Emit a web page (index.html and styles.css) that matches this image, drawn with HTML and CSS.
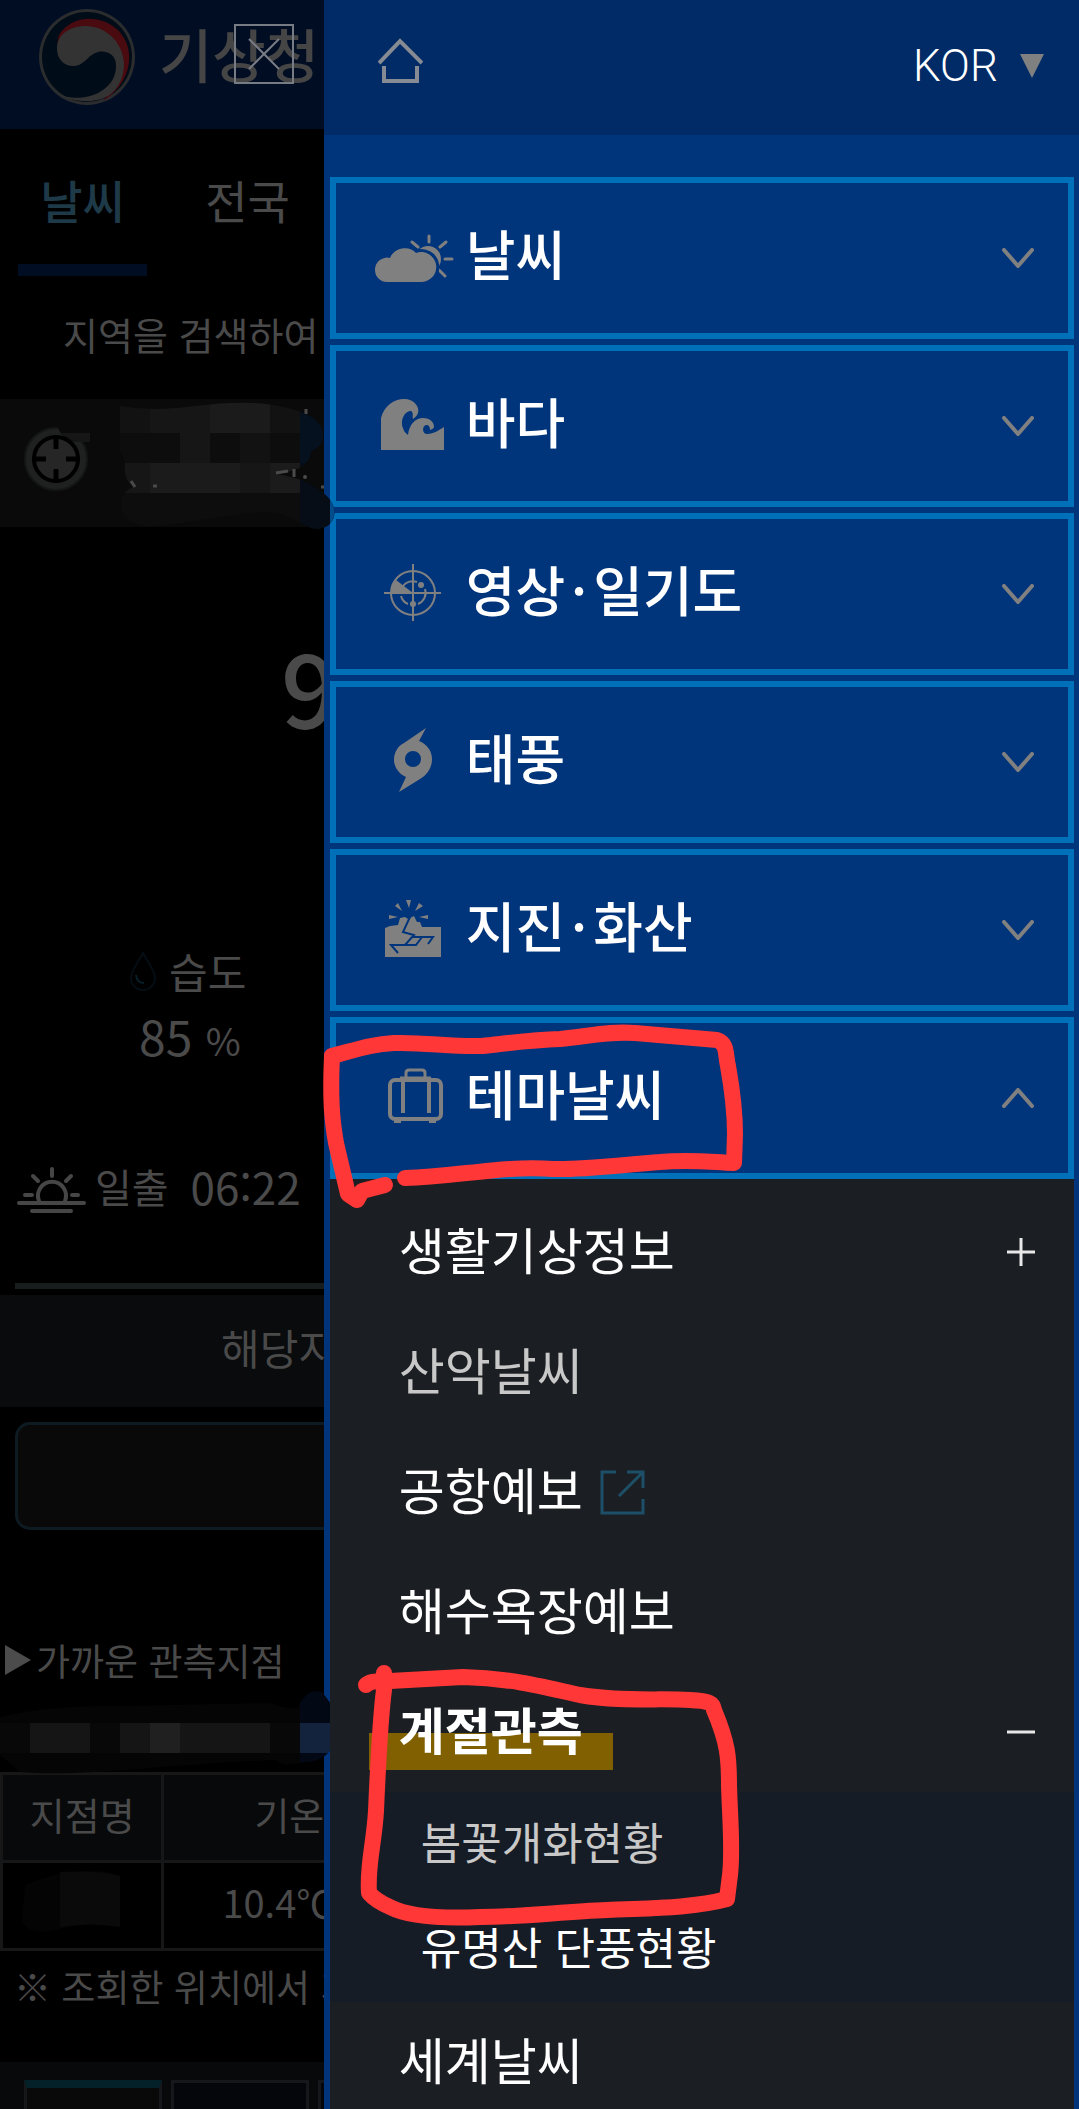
FILE: index.html
```html
<!DOCTYPE html>
<html lang="ko">
<head>
    <meta charset="UTF-8">
    <title>기상청</title>
    <meta name="viewport" content="width=device-width, initial-scale=1.0">
    <link rel="stylesheet" href="styles.css">
</head>
<body>
<!--메뉴 뒤에 깔린 본문-->
<main class="page">
    <header class="header">
        <svg class="logo" viewBox="0 0 96 96">
            <circle cx="48" cy="48" r="48" fill="#2b2c2e"/>
            <circle cx="48" cy="48" r="45" fill="#000c17"/>
            <path d="M20 26C32 6 62 4 80 22C98 42 92 74 64 92C84 68 84 36 68 24C52 14 30 16 18 36Z" fill="#490a10"/>
            <path d="M18 40C18 24 32 17 48 17C70 18 84 36 85 54C85 72 76 86 62 90C50 94 34 92 24 87C50 94 78 80 77 56C77 46 68 41 59 43C48 46 46 57 34 57C25 57 18 50 18 40Z" fill="#333"/>
        </svg>
        <h1>기상청</h1>
    </header>
    <nav class="tabs">
        <a class="on" href="#">날씨</a>
        <a href="#">전국</a>
    </nav>
    <p class="search">지역을 검색하여</p>
    <div class="location">
        <button class="gps" type="button" aria-label="현재 위치">
            <svg viewBox="0 0 64 64">
                <circle cx="32" cy="32" r="31" fill="#1f2020" stroke="#151616" stroke-width="2"/>
                <circle cx="32" cy="32" r="22" fill="#262626" stroke="#000" stroke-width="4"/>
                <path d="M32 8V22M32 42V56M8 32H22M42 32H56" stroke="#000" stroke-width="5"/>
            </svg>
        </button>
    </div>
    <p class="temp">9</p>
    <dl class="humidity">
        <dt>
            <svg viewBox="0 0 28 40" fill="none">
                <path d="M14 2C9 12 2 19 2 27A12 12 0 0 0 26 27C26 19 19 12 14 2Z" stroke="#050d14" stroke-width="2"/>
                <path d="M7 24Q8 32 15 32" stroke="#07202a" stroke-width="2"/>
            </svg>
            습도
        </dt>
        <dd>85 <small>%</small></dd>
    </dl>
    <p class="sunrise">
        <svg viewBox="0 0 70 48" fill="none" stroke="#464646" stroke-width="4" stroke-linecap="round">
            <path d="M2 37H67M15 45H54M22 35A14 14 0 1 1 48 35M35 3V10M16 10L21 15M54 10L49 15M8 29H15M55 29H61"/>
        </svg>
        <span>일출</span>
        <time>06:22</time>
    </p>
    <div class="line"></div>
    <p class="notice">해당지</p>
    <div class="panel"></div>
    <h2 class="near"><svg viewBox="0 0 26 30"><path d="M0 0L26 15L0 30Z" fill="#4c4c4c"/></svg>가까운 관측지점</h2>
    <table class="station">
        <tr><th>지점명</th><th>기온</th></tr>
        <tr><td></td><td>10.4℃</td></tr>
    </table>
    <p class="note">※ 조회한 위치에서 가</p>
    <div class="cards">
        <div class="card on"></div>
        <div class="card"></div>
        <div class="card"></div>
    </div>
</main>

<button class="close" type="button" aria-label="닫기">
    <svg viewBox="0 0 60 60" stroke="#777b84" stroke-width="2"><path d="M15 15L45 45M45 15L15 45"/></svg>
</button>

<!--전체 메뉴-->
<aside class="drawer">
    <div class="top">
        <a class="home" href="#" aria-label="홈">
            <svg viewBox="0 0 45 46" fill="none" stroke="#868a92" stroke-width="4">
                <path d="M1 25L22 3L44 25M6 28V43H39V28"/>
            </svg>
        </a>
        <label class="lang">
            <select aria-label="언어">
                <option>KOR</option>
            </select>
            <svg viewBox="0 0 24 24"><path d="M0 0H24L12 24Z" fill="#808080"/></svg>
        </label>
    </div>
    <nav class="menu">
        <button class="item" type="button">
            <svg class="icon" viewBox="0 0 84 78">
                <circle cx="56" cy="40" r="13"/>
                <path d="M57 17V23M68 28L74 23M73 40H80M67 51L73 57M40 23L46 28" stroke="#808080" stroke-width="3" stroke-linecap="round"/>
                <path d="M15 63A12 12 0 0 1 3 51A12 12 0 0 1 18 39C22 28 38 26 44 34A15 15 0 1 1 48 63Z" stroke="#00347b" stroke-width="6" paint-order="stroke"/>
            </svg>
            <span>날씨</span>
            <svg class="arrow" viewBox="0 0 32 20"><path d="M2 2L16 18L30 2"/></svg>
        </button>
        <button class="item" type="button">
            <svg class="icon" viewBox="0 0 84 78">
                <path d="M9 63V31C12 19 22 12 32 12C42 12 48 20 46 26C45 29 43 30 41 32C40 29 42 26 39 24C32 24 28 34 31 41C32 45 34 46 36 48C37 38 43 31 51 31C58 31 62 35 62 40C61 42 60 42 58 43C58 40 57 38 54 38C50 39 50 47 55 47C62 47 67 43 72 40V63Z"/>
            </svg>
            <span>바다</span>
            <svg class="arrow" viewBox="0 0 32 20"><path d="M2 2L16 18L30 2"/></svg>
        </button>
        <button class="item" type="button">
            <svg class="icon" viewBox="0 0 84 78">
                <g fill="none" stroke="#808080" stroke-width="2">
                    <circle cx="41" cy="38" r="22"/>
                    <path d="M12 38H69M41 9V66M31 31A12 12 0 0 1 45 27M53 34A12 12 0 0 1 46 49M36 49A12 12 0 0 1 29 41"/>
                </g>
                <path d="M41 38H19A22 22 0 0 1 24 25Z"/>
                <circle cx="49" cy="30" r="3"/>
                <circle cx="41" cy="49" r="3"/>
            </svg>
            <span>영상<i>·</i>일기도</span>
            <svg class="arrow" viewBox="0 0 32 20"><path d="M2 2L16 18L30 2"/></svg>
        </button>
        <button class="item" type="button">
            <svg class="icon" viewBox="0 0 84 78">
                <path fill-rule="evenodd" d="M54 5L47 18C55 21 60 28 60 36C60 45 55 52 48 56L27 69L34 54C27 51 22 44 22 37C22 29 26 23 32 20ZM41 28A8 8 0 1 0 41 44A8 8 0 1 0 41 28Z"/>
            </svg>
            <span>태풍</span>
            <svg class="arrow" viewBox="0 0 32 20"><path d="M2 2L16 18L30 2"/></svg>
        </button>
        <button class="item" type="button">
            <svg class="icon" viewBox="0 0 84 78">
                <path d="M13 66V37L18 35L26 34L28 27L33 26L36 28L42 25L45 31L48 31L50 36H69V66ZM34 9H39L37 17ZM23 15L26 12L30 20ZM17 24V28L26 26ZM47 12L51 15L43 20ZM56 24V28L47 26Z"/>
                <path d="M38 26L31 41L42 44L33 54H19L26 62M41 46H61L56 53M50 46L44 54H33" fill="none" stroke="#00347b" stroke-width="2"/>
            </svg>
            <span>지진<i>·</i>화산</span>
            <svg class="arrow" viewBox="0 0 32 20"><path d="M2 2L16 18L30 2"/></svg>
        </button>
        <button class="item" type="button" aria-expanded="true">
            <svg class="icon" viewBox="0 0 84 78">
                <g fill="none" stroke="#808080" stroke-width="4">
                    <rect x="18" y="21" width="51" height="39" rx="5"/>
                    <path d="M34 20V14Q34 11 37 11H50Q53 11 53 14V20M28 19H59" stroke-width="3"/>
                    <path d="M31 22V54M57 22V54M22 62H29M57 62H64"/>
                </g>
            </svg>
            <span>테마날씨</span>
            <svg class="arrow" viewBox="0 0 32 20"><path d="M2 18L16 2L30 18"/></svg>
        </button>
        <ul class="sub">
            <li><a href="#"><span>생활기상정보</span><svg class="sign" viewBox="0 0 28 28"><path d="M0 14H28M14 0V28"/></svg></a></li>
            <li><a class="visited" href="#"><span>산악날씨</span></a></li>
            <li><a href="#"><span>공항예보</span><svg class="out" viewBox="0 0 45 45"><path d="M16 2H2V43H43V29M27 2H43V18M43 2L19 26"/></svg></a></li>
            <li><a href="#"><span>해수욕장예보</span></a></li>
            <li>
                <a class="open" href="#"><mark>계절관측</mark><svg class="sign" viewBox="0 0 28 28"><path d="M0 14H28"/></svg></a>
                <ul class="deep">
                    <li><a class="visited" href="#"><span>봄꽃개화현황</span></a></li>
                    <li><a href="#"><span>유명산 단풍현황</span></a></li>
                </ul>
            </li>
            <li><a href="#"><span>세계날씨</span></a></li>
        </ul>
    </nav>
</aside>

<!--손글씨 표시와 모자이크-->
<svg class="marks" viewBox="0 0 1079 2109" aria-hidden="true">
    <defs>
        <clipPath id="blur1">
            <path d="M120 406Q155 412 195 406Q270 396 310 416Q325 425 323 438Q321 448 311 451C311 468 290 472 276 474C300 477 320 487 330 500C340 514 332 528 318 529C303 529 290 512 268 512C230 512 180 527 145 526C115 522 115 494 133 487C125 480 124 472 125 463L120 450Z"/>
        </clipPath>
        <clipPath id="blur2">
            <path d="M0 1717Q50 1705 120 1706L270 1703Q285 1709 298 1708Q306 1688 322 1692L330 1703V1750Q322 1762 304 1762Q285 1768 275 1760Q220 1762 150 1768Q60 1776 20 1772L0 1755Z"/>
        </clipPath>
    </defs>
    <g clip-path="url(#blur1)">
        <path d="M120 399H340V530H120Z" fill="#0d0d0d"/>
        <path d="M120 403H150V433H120ZM180 433H210V463H180ZM240 433H270V463H240ZM270 403H300V433H270Z" fill="#121212"/>
        <path d="M150 403H210V433H150ZM120 463H150V493H120ZM240 463H270V493H240ZM180 433H210V463H180Z" fill="#161616"/>
        <path d="M210 399H270V433H210ZM150 463H240V493H150ZM270 463H300V493H270Z" fill="#1b1b1b"/>
        <path d="M300 399H330V463H300Z" fill="#06111f"/>
        <path d="M300 463H330V530H300Z" fill="#060d17"/>
        <path d="M330 480H340V530H330Z" fill="#004c8c"/>
    </g>
    <!--모자이크 사이로 남은 글자 조각-->
    <path d="M131 481L135 487M153 486H157M276 473L288 471M294 469V477M306 409V414M321 487H324" fill="none" stroke="#4a4a4a" stroke-width="3"/>
    <circle cx="305" cy="477" r="2" fill="#4a4a4a"/>
    <path d="M60 412Q70 402 90 402V442H75Q58 436 58 425Z" fill="#0a0a0a"/>
    <path d="M60 433H90V442H75Z" fill="#161616"/>
    <g clip-path="url(#blur2)">
        <path d="M0 1690H330V1775H0Z" fill="#050505"/>
        <path d="M0 1723H30V1753H0ZM90 1723H120V1753H90ZM270 1723H300V1753H270Z" fill="#080808"/>
        <path d="M30 1723H90V1753H30ZM120 1723H150V1753H120ZM180 1723H270V1753H180Z" fill="#151515"/>
        <path d="M150 1723H180V1753H150Z" fill="#202020"/>
        <path d="M300 1690H330V1775H300Z" fill="#020914"/>
        <path d="M300 1723H330V1753H300Z" fill="#13233d"/>
    </g>
    <path d="M25 1885Q60 1870 90 1871Q110 1871 120 1876V1927Q90 1921 60 1929Q28 1937 22 1920Z" fill="#040404"/>
    <path d="M60 1872Q100 1870 120 1876V1927Q90 1922 60 1927Z" fill="#0a0a0a"/>
    <g class="pen">
        <path d="M332 1056C355 1050 372 1044 394 1043C425 1042 450 1047 482 1046C510 1043 530 1040 560 1039C590 1036 610 1031 635 1033C670 1036 695 1038 717 1040C728 1044 725 1054 728 1066C733 1094 735 1115 735 1134L734 1163C710 1162 690 1159 660 1162C620 1165 580 1170 553 1169C505 1165 455 1177 405 1178"/>
        <path d="M332 1056C330 1100 332 1120 336 1143L348 1194L357 1200L362 1191L385 1185"/>
        <path d="M366 1685C371 1680 380 1682 390 1681L463 1677C510 1678 545 1687 580 1695C620 1702 660 1698 690 1700C710 1701 713 1703 714 1710C728 1743 729 1758 729 1785C730 1820 733 1850 730 1875L727 1899C690 1909 640 1908 607 1910C560 1912 520 1917 480 1917C435 1919 405 1915 390 1907Q376 1901 369 1893C367 1865 374 1845 376 1811C378 1765 380 1720 384 1690V1673"/>
    </g>
</svg>
</body>
</html>
```
FILE: styles.css
```css
* {
    box-sizing: border-box;
    margin: 0;
    padding: 0;
}

body {
    height: 100vh;
    overflow: hidden;
    background: #000;
    color: #4a4a4a;
    font-family: "Noto Sans CJK KR", sans-serif;
    font-size: 38px;
    line-height: 60px;
}

a {
    color: inherit;
    text-decoration: none;
}

ul {
    list-style: none;
}

button, select {
    border: 0;
    background: none;
    color: inherit;
    font: inherit;
}

svg {
    display: block;
    flex: none;
}

/*본문*/
.page {
    height: 100%;
    overflow: hidden;
    white-space: nowrap;
}

.header {
    display: flex;
    align-items: center;
    gap: 24px;
    height: 129px;
    padding: 0 0 16px 39px;
    background: #000d23;
}

.logo {
    width: 96px;
}

.header h1 {
    padding-bottom: 8px;
    color: #454545;
    font-size: 58px;
    font-weight: 500;
}

.tabs {
    display: flex;
    gap: 36px;
    height: 147px;
    padding-left: 18px;
}

.tabs a {
    width: 129px;
    border-bottom: 12px solid transparent;
    font-size: 46px;
    line-height: 140px;
    text-align: center;
}

.tabs .on {
    border-color: #000d23;
    color: #1e3a48;
    font-weight: 500;
}

.search {
    padding: 0 0 8px 63px;
    line-height: 115px;
}

.location {
    display: flex;
    align-items: center;
    height: 128px;
    padding: 0 0 8px 24px;
    background: #0a0a0a;
}

.gps svg {
    width: 64px;
}

.temp {
    padding: 94px 0 6px 281px;
    font-size: 100px;
    font-weight: 500;
    line-height: 130px;
}

.humidity {
    width: 30%;
    padding: 182px 0 0 129px;
    line-height: 64px;
}

.humidity dt {
    display: flex;
    align-items: center;
    gap: 12px;
    font-size: 42px;
}

.humidity dt svg {
    width: 28px;
}

.humidity dd {
    height: 64px;
    padding-left: 10px;
    font-size: 48px;
}

.humidity small {
    font-size: 38px;
}

.sunrise {
    display: flex;
    align-items: center;
    gap: 8px;
    margin-top: 91px;
    padding-left: 17px;
    font-size: 40px;
    line-height: 56px;
}

.sunrise svg {
    width: 70px;
}

.sunrise span, .sunrise time {
    padding-bottom: 8px;
}

.sunrise time {
    padding-left: 14px;
    font-size: 44px;
}

.line {
    height: 6px;
    margin: 61px 15px 6px;
    background: #171c1c;
}

.notice {
    padding: 0 0 8px 221px;
    background: #090b0c;
    font-size: 42px;
    line-height: 104px;
}

.panel {
    height: 108px;
    margin: 15px;
    border: 3px solid #0d1a22;
    border-radius: 15px;
    background: #090909;
}

.near {
    display: flex;
    align-items: center;
    gap: 5px;
    margin: 100px 0 82px 5px;
    font-size: 37px;
    font-weight: 400;
}

.near svg {
    width: 26px;
}

.station {
    width: 100%;
    border-collapse: collapse;
    text-align: left;
}

.station th, .station td {
    height: 88px;
    padding: 0 0 8px 58px;
    border: 3px solid #171717;
    font-weight: 400;
}

.station th {
    padding-left: 90px;
    background: #08090b;
}

.station th:first-child {
    width: 15%;
    padding-left: 0;
    text-align: center;
}

.note {
    margin-top: 5px;
    padding-left: 14px;
    font-size: 37px;
}

.cards {
    display: flex;
    gap: 9px;
    height: 90px;
    margin-top: 46px;
    padding: 18px 24px 0;
    background: #08090b;
}

.card {
    width: 138px;
    border: 3px solid #15171b;
    background: #05060b;
}

.card.on {
    border-top: 8px solid #04212a;
    background: #090909;
}

.close {
    position: absolute;
    top: 24px;
    left: 234px;
    width: 60px;
    height: 60px;
    outline: 2px solid #777b84;
    outline-offset: -2px;
}

/*오른쪽 메뉴*/
.drawer {
    position: fixed;
    top: 0;
    right: 0;
    bottom: 0;
    width: 70%;
    overflow: hidden;
    background: #00347b;
    color: #fff;
}

.top {
    display: flex;
    align-items: center;
    justify-content: space-between;
    height: 135px;
    padding: 0 35px 14px 54px;
    background: #002b66;
}

.home svg {
    width: 45px;
}

.lang {
    display: flex;
    align-items: center;
    gap: 22px;
    padding-top: 10px;
}

.lang select {
    appearance: none;
    font-family: Roboto, sans-serif;
    font-size: 44px;
    font-weight: 300;
}

.lang svg {
    width: 24px;
}

.menu {
    display: flex;
    flex-direction: column;
    gap: 6px;
    padding: 42px 5px 0 6px;
}

.item {
    display: flex;
    align-items: center;
    gap: 10px;
    height: 162px;
    padding: 0 34px 0 36px;
    border: 6px solid #0070b8;
    font-size: 54px;
    font-weight: 500;
    text-align: left;
}

.item span {
    flex: 1;
    padding-bottom: 10px;
}

.item i {
    padding: 0 6px;
    font-style: normal;
}

.icon {
    width: 84px;
    fill: #808080;
}

.arrow {
    width: 32px;
    fill: none;
    stroke: #808080;
    stroke-width: 4px;
    stroke-linecap: round;
    stroke-linejoin: round;
}

.sub {
    margin-top: -6px;
    padding-top: 13px;
    background: #1b1e22;
    font-size: 50px;
}

.sub a {
    display: flex;
    align-items: center;
    gap: 17px;
    height: 120px;
    padding: 0 39px 0 69px;
}

.sub span {
    padding-bottom: 8px;
}

.sub .visited {
    color: #c8c8c8;
}

.sign {
    width: 28px;
    margin-left: auto;
    stroke: #e8e8e8;
    stroke-width: 3px;
}

.out {
    width: 45px;
    fill: none;
    stroke: #1d5068;
    stroke-width: 3px;
}

.sub .open {
    padding-left: 39px;
}

/*형광펜 효과*/
mark {
    padding: 0 30px 8px;
    background: linear-gradient(transparent 39px, #806000 39px);
    color: #fff;
    font-weight: 700;
    line-height: 68px;
}

.sub .deep {
    background: #161c26;
    font-size: 44px;
}

.sub .deep a {
    height: 105px;
    padding-left: 91px;
}

.marks {
    position: absolute;
    top: 0;
    left: 0;
    width: 100%;
    pointer-events: none;
}

.pen {
    fill: none;
    stroke: #ff3737;
    stroke-width: 16px;
    stroke-linecap: round;
    stroke-linejoin: round;
}
```
